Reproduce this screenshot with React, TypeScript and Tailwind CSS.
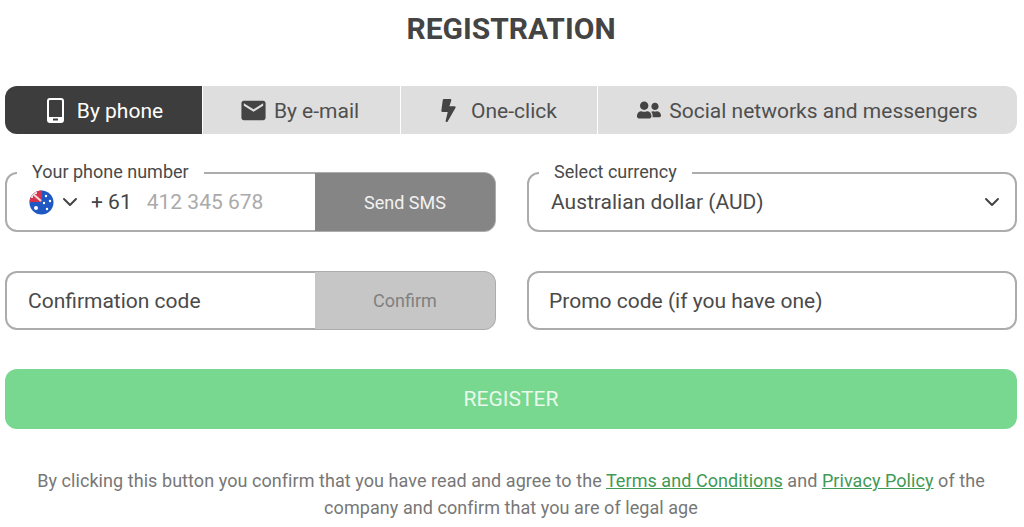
import { FaBolt, FaUserFriends } from 'react-icons/fa';
import { MdEmail } from 'react-icons/md';
import { ChevronDown } from 'lucide-react';

const PhoneIcon = () => (
    <svg width="17" height="25" viewBox="0 0 17 25" fill="none">
        <rect x="1" y="1" width="15" height="23" rx="2" stroke="#fff" strokeWidth="2" />
        <rect x="1" y="19" width="15" height="5" rx="1" fill="#fff" />
        <rect x="6" y="20.5" width="5" height="2" fill="#3d3d3d" />
    </svg>
);

const AussieFlag = () => (
    <svg width="25" height="25" viewBox="0 0 25 25">
        <defs>
            <clipPath id="flag-clip">
                <circle cx="12.5" cy="12.5" r="12" />
            </clipPath>
        </defs>
        <g clipPath="url(#flag-clip)">
            <rect width="25" height="25" fill="#1f57c3" />
            <rect width="13" height="12" fill="#d8324a" />
            <path d="M3 3l9 8M3 3h5M3 3v5" stroke="#f4d9dc" strokeWidth="2" fill="none" />
            <circle cx="7" cy="18" r="2" fill="#fff" />
            <circle cx="17" cy="6" r="1.2" fill="#fff" />
            <circle cx="21" cy="11" r="1.2" fill="#fff" />
            <circle cx="15" cy="13" r="1.2" fill="#fff" />
            <circle cx="18" cy="19" r="1.2" fill="#fff" />
        </g>
    </svg>
);

const tabClass = 'flex items-center justify-center bg-[#dedede] text-[#4f4f4f]';

export default function App() {
    return (
        <div className="h-[527px] overflow-hidden bg-white pl-[5px] pr-[7px] font-['Roboto',sans-serif]">
            <h1 className="pt-[9px] text-center text-[30px] leading-[40px] font-bold text-[#444444]">REGISTRATION</h1>

            <div className="mt-[37px] flex h-[48px] gap-[1px] overflow-hidden rounded-[12px] text-[21px]">
                <div className="flex w-[197px] items-center justify-center gap-[13px] bg-[#3d3d3d] pl-[3px] text-white">
                    <PhoneIcon />
                    <span className="pt-[3px]">By phone</span>
                </div>
                <div className={`${tabClass} w-[197px] gap-[6px] pr-[5px]`}>
                    <MdEmail size={29} color="#444444" />
                    <span className="pt-[3px]">By e-mail</span>
                </div>
                <div className={`${tabClass} w-[196px] gap-[11px] pr-[4px]`}>
                    <FaBolt size={23} color="#444444" />
                    <span className="pt-[3px]">One-click</span>
                </div>
                <div className={`${tabClass} flex-1 gap-[8px]`}>
                    <FaUserFriends size={24} color="#444444" />
                    <span className="pt-[3px]">Social networks and messengers</span>
                </div>
            </div>

            <div className="mt-[38px] grid grid-cols-[491px_490px] grid-rows-[60px_59px] gap-x-[31px] gap-y-[39px]">
                <div className="relative flex rounded-[12px] border-2 border-[#acacac]">
                    <span className="absolute top-[-13px] left-[10px] bg-white px-[15px] text-[18px] leading-[21px] text-[#4a4a4a]">
                        Your phone number
                    </span>
                    <div className="flex flex-1 items-center pl-[22px] text-[21px]">
                        <AussieFlag />
                        <ChevronDown size={24} strokeWidth={2} color="#444444" className="ml-[4px]" />
                        <span className="ml-[9px] pt-[2px] text-[#444444]">+ 61</span>
                        <span className="ml-[15px] pt-[2px] text-[#aaaaaa]">412 345 678</span>
                    </div>
                    <div className="-my-[1px] -mr-[1px] flex w-[180px] items-center justify-center rounded-r-[11px] bg-[#858585] text-[18px] text-[#f2f2f2]">
                        Send SMS
                    </div>
                </div>

                <div className="relative flex items-center justify-between rounded-[12px] border-2 border-[#acacac] pr-[11px] pl-[22px] text-[21px] text-[#4a4a4a]">
                    <span className="absolute top-[-13px] left-[10px] bg-white px-[15px] text-[18px] leading-[21px]">
                        Select currency
                    </span>
                    <span className="pt-[2px]">Australian dollar (AUD)</span>
                    <ChevronDown size={24} strokeWidth={2} color="#444444" />
                </div>

                <div className="flex rounded-[12px] border-2 border-[#acacac]">
                    <div className="flex flex-1 items-center pt-[2px] pl-[21px] text-[21px] text-[#4a4a4a]">Confirmation code</div>
                    <div className="-my-[1px] -mr-[1px] flex w-[180px] items-center justify-center rounded-r-[11px] bg-[#c6c6c6] text-[18px] text-[#808080]">
                        Confirm
                    </div>
                </div>

                <div className="flex items-center rounded-[12px] border-2 border-[#acacac] pt-[2px] pl-[20px] text-[21px] text-[#4a4a4a]">
                    Promo code (if you have one)
                </div>
            </div>

            <div className="mt-[39px] flex h-[60px] items-center justify-center rounded-[12px] bg-[#78d88f] pt-[2px] text-[21px] text-[#e8f8ec]">
                REGISTER
            </div>

            <p className="mx-auto mt-[38px] w-[960px] text-center text-[18px] leading-[27px] tracking-[0.06px] text-[#777777]">
                By clicking this button you confirm that you have read and agree to the{' '}
                <a className="text-[#3f9a55] underline">Terms and Conditions</a> and{' '}
                <a className="text-[#3f9a55] underline">Privacy Policy</a> of the company and confirm that you are of legal age
            </p>
        </div>
    );
}
